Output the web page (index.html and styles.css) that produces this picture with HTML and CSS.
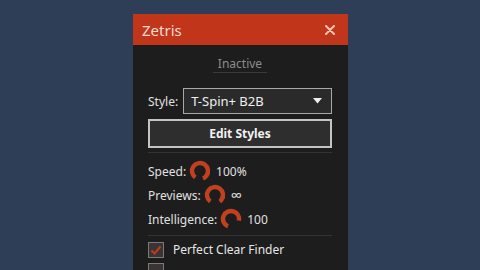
FILE: index.html
```html
<!DOCTYPE html>
<html>
<head>
<meta charset="utf-8">
<link rel="stylesheet" href="styles.css">
</head>
<body>
<div class="window">
  <div class="titlebar">
    <span class="title">Zetris</span>
    <svg class="close" width="10" height="10" viewBox="0 0 10 10"><path d="M1 1L9 9M9 1L1 9" stroke="#f4c4b4" stroke-width="2" stroke-linecap="round"/></svg>
  </div>
  <div class="content">
    <div class="status"><span class="status-text">Inactive</span></div>
    <div class="style-row">
      <span class="label">Style:</span>
      <div class="select"><span>T-Spin+ B2B</span><svg width="9" height="6" viewBox="0 0 9 6"><path d="M0 0H9L4.5 5.5Z" fill="#eee"/></svg></div>
    </div>
    <div class="button">Edit Styles</div>
    <div class="sep"></div>
    <div class="knobs">
      <div class="knob-row">
        <span class="label">Speed:</span>
        <svg class="knob" width="22" height="22" viewBox="0 0 22 22"><circle cx="11" cy="11" r="8" fill="none" stroke="#c0401f" stroke-width="4.5" stroke-dasharray="42 8.3" transform="rotate(126 11 11)"/></svg>
        <span class="value">100%</span>
      </div>
      <div class="knob-row">
        <span class="label">Previews:</span>
        <svg class="knob" width="22" height="22" viewBox="0 0 22 22"><circle cx="11" cy="11" r="8" fill="none" stroke="#c0401f" stroke-width="4.5" stroke-dasharray="40 10.3" transform="rotate(126 11 11)"/></svg>
        <span class="value inf">∞</span>
      </div>
      <div class="knob-row">
        <span class="label">Intelligence:</span>
        <svg class="knob" width="22" height="22" viewBox="0 0 22 22"><circle cx="11" cy="11" r="8" fill="none" stroke="#c0401f" stroke-width="4.5" stroke-dasharray="36 14.3" transform="rotate(112 11 11)"/></svg>
        <span class="value">100</span>
      </div>
    </div>
    <div class="sep sep2"></div>
    <div class="check-row">
      <div class="checkbox"><svg width="12" height="10" viewBox="0 0 12 10"><path d="M1.5 5.5L4.5 8.5L10.5 1.5" fill="none" stroke="#b93a22" stroke-width="2.2"/></svg></div>
      <span class="check-label">Perfect Clear Finder</span>
    </div>
    <div class="check-row">
      <div class="checkbox"></div>
      <span class="check-label"></span>
    </div>
  </div>
</div>
</body>
</html>
```
FILE: styles.css
```css
html, body {
  margin: 0;
  padding: 0;
  width: 480px;
  height: 270px;
  overflow: hidden;
  background: #2f3e57;
  font-family: "Noto Sans", "Open Sans", sans-serif;
  color: #e6e6e6;
}
.window {
  margin: 14px 0 0 133px;
  width: 215px;
  height: 260px;
  background: #1d1d1d;
}
.titlebar {
  height: 31px;
  background: #c1361b;
  display: flex;
  align-items: center;
  justify-content: space-between;
  padding: 0 13px 0 9px;
}
.title {
  font-size: 15px;
  color: #f8dcd2;
}
.close { display: block; }
.content {
  padding: 0 16px 0 15px;
}
.status {
  display: flex;
  justify-content: center;
  padding-top: 10px;
  height: 32px;
  box-sizing: border-box;
}
.status-text {
  font-size: 12px;
  color: #8c8c8c;
  height: 17px;
  padding: 0 5px;
  border-bottom: 1px solid #3a3a3a;
  line-height: 17px;
}
.style-row {
  display: flex;
  align-items: center;
  gap: 5px;
  margin-top: 11px;
}
.label {
  font-size: 12px;
  color: #e0e0e0;
}
.select {
  flex: 1;
  height: 26px;
  box-sizing: border-box;
  border: 1px solid #a8a8a8;
  background: #2a2a2a;
  display: flex;
  align-items: center;
  justify-content: space-between;
  padding: 0 9px 0 7px;
  font-size: 13px;
  color: #f0f0f0;
}
.button {
  margin-top: 5px;
  height: 29px;
  box-sizing: border-box;
  border: 2px solid #c4c4c4;
  background: #2e2e2e;
  display: flex;
  align-items: center;
  justify-content: center;
  font-size: 12px;
  font-weight: bold;
  color: #f2f2f2;
}
.sep {
  height: 1px;
  background: #333;
  margin-top: 4px;
}
.knobs {
  display: flex;
  flex-direction: column;
  padding-top: 6px;
}
.knob-row {
  display: flex;
  align-items: center;
  gap: 3px;
  height: 24px;
}
.knob { display: block; }
.value {
  font-size: 12px;
  color: #e0e0e0;
  margin-left: 2px;
}
.value.inf {
  font-size: 16px;
  line-height: 16px;
}
.sep2 { margin-top: 4px; }
.check-row {
  display: flex;
  align-items: center;
  gap: 9px;
  margin-top: 5px;
}
.checkbox {
  width: 16px;
  height: 16px;
  box-sizing: border-box;
  border: 1px solid #7a7a7a;
  background: #3a3434;
  display: flex;
  align-items: center;
  justify-content: center;
}
.check-label {
  font-size: 12px;
  color: #e6e6e6;
}
```
